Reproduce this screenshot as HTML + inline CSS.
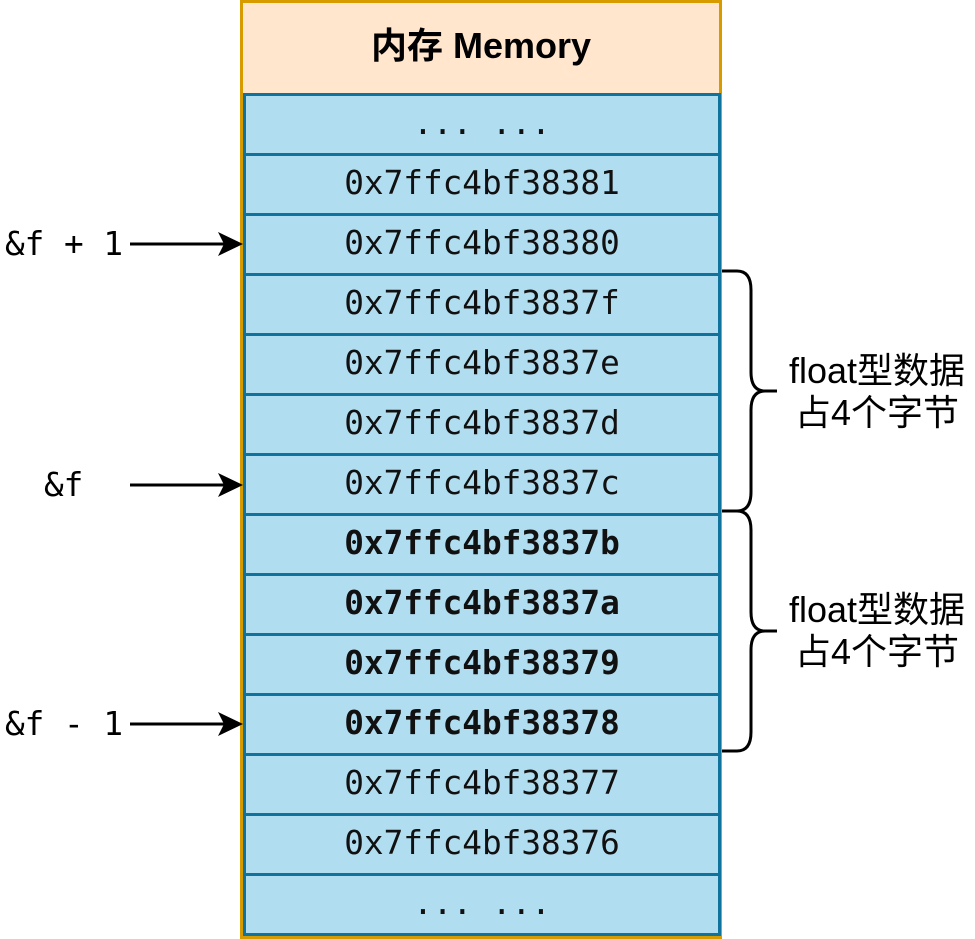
<!DOCTYPE html>
<html><head><meta charset="utf-8"><style>
body{margin:0;width:975px;height:939px;background:#fff;position:relative;overflow:hidden;font-family:"Liberation Sans","Noto Sans CJK SC",sans-serif}
#outer{position:absolute;left:240px;top:0;width:476px;height:933px;border:3px solid #d79b00;background:#ffe6cc}
#hdr{position:absolute;left:240px;top:0;width:482px;height:86px;display:flex;align-items:center;justify-content:center;font-weight:bold;font-size:36px;color:#000}
.row{position:absolute;left:243px;width:472px;height:57px;border:3px solid #10739e;background:#b1ddf0;display:flex;align-items:center;justify-content:center;font-family:"DejaVu Sans Mono","Liberation Mono",monospace;font-size:32.7px;color:#111;box-sizing:content-box}
.row span{position:relative;top:-2px}
.b{font-weight:bold}
.lbl{position:absolute;font-family:"DejaVu Sans Mono","Liberation Mono",monospace;font-size:32.7px;white-space:pre;line-height:1}
.rt{position:absolute;font-size:36px;line-height:42px;text-align:center;width:200px;left:777px}
</style></head><body>
<div id="outer"></div>
<div id="hdr">内存 Memory</div>
<div class="row" style="top:93px"><span>... ...</span></div>
<div class="row" style="top:153px"><span>0x7ffc4bf38381</span></div>
<div class="row" style="top:213px"><span>0x7ffc4bf38380</span></div>
<div class="row" style="top:273px"><span>0x7ffc4bf3837f</span></div>
<div class="row" style="top:333px"><span>0x7ffc4bf3837e</span></div>
<div class="row" style="top:393px"><span>0x7ffc4bf3837d</span></div>
<div class="row" style="top:453px"><span>0x7ffc4bf3837c</span></div>
<div class="row b" style="top:513px"><span>0x7ffc4bf3837b</span></div>
<div class="row b" style="top:573px"><span>0x7ffc4bf3837a</span></div>
<div class="row b" style="top:633px"><span>0x7ffc4bf38379</span></div>
<div class="row b" style="top:693px"><span>0x7ffc4bf38378</span></div>
<div class="row" style="top:753px"><span>0x7ffc4bf38377</span></div>
<div class="row" style="top:813px"><span>0x7ffc4bf38376</span></div>
<div class="row" style="top:873px"><span>... ...</span></div>
<div class="lbl" style="left:5px;top:228px">&amp;f + 1</div>
<div class="lbl" style="left:44px;top:469px">&amp;f</div>
<div class="lbl" style="left:5px;top:708px">&amp;f - 1</div>
<svg width="975" height="939" style="position:absolute;left:0;top:0" fill="none">
<g stroke="#000" stroke-width="3">
<line x1="130" y1="244" x2="224" y2="244"/>
<line x1="130" y1="485" x2="224" y2="485"/>
<line x1="130" y1="724" x2="224" y2="724"/>
<path d="M722 271 H737 Q751 271 751 290 V372 Q751 391 765 391 H777 M765 391 Q751 391 751 410 V492 Q751 511 737 511 H722"/>
<path d="M722 511 H737 Q751 511 751 530 V612 Q751 631 765 631 H777 M765 631 Q751 631 751 650 V732 Q751 751 737 751 H722"/>
</g>
<g fill="#000">
<path d="M243 244 L218 232 L224 244 L218 256Z"/>
<path d="M243 485 L218 473 L224 485 L218 497Z"/>
<path d="M243 724 L218 712 L224 724 L218 736Z"/>
</g>
</svg>
<div class="rt" style="top:350px">float型数据<br>占4个字节</div>
<div class="rt" style="top:589px">float型数据<br>占4个字节</div>
</body></html>
